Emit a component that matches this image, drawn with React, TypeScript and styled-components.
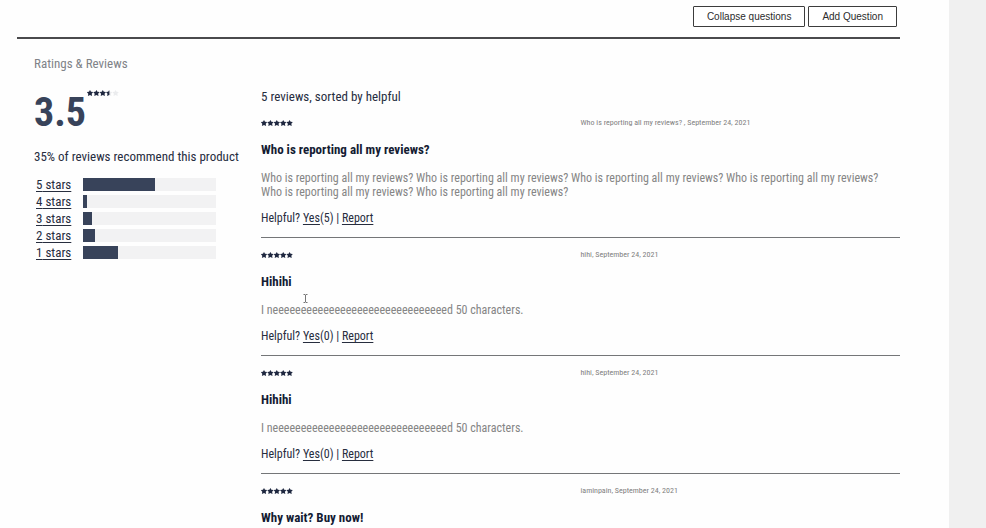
import React from "react";
import styled, { createGlobalStyle } from "styled-components";

const GlobalStyle = createGlobalStyle`
  * { box-sizing: border-box; }
  html, body, #root { height: 100%; }
  body { margin: 0; background: #fefefe; color: #272d3e; font-family: "Roboto Condensed", Roboto, sans-serif; }
  h1, h2, h3, p, ul { margin: 0; padding: 0; font-weight: 400; }
`;

const Page = styled.div`
  min-height: 100%;
  padding-right: 49px;
  border-right: 37px solid #f0f0f0;
`;

const Content = styled.main`
  margin-left: 17px;
`;

const Toolbar = styled.div`
  display: flex;
  justify-content: flex-end;
  gap: 3px;
  padding: 6px 3px 10px 0;
  border-bottom: 2px solid #4a4a4c;
`;

const ToolbarButton = styled.button`
  height: 21px;
  padding: 0 13px;
  border: 1px solid #3c3c3c;
  border-radius: 1px;
  background: #fff;
  color: #2c2c2c;
  font: 10px/19px "Liberation Sans", Arial, sans-serif;
`;

const SectionTitle = styled.h2`
  padding: 16px 0 0 17px;
  color: #808388;
  font-size: 13px;
  line-height: 18px;
`;

const Columns = styled.div`
  display: grid;
  grid-template-columns: 210px minmax(0, 1fr);
  column-gap: 17px;
  padding: 15px 0 0 17px;
`;

const Score = styled.div`
  display: flex;
  align-items: flex-start;
  gap: 1px;
  padding-top: 2px;
`;

const ScoreValue = styled.strong`
  padding-top: 2px;
  color: #38435a;
  font-size: 40px;
  line-height: 42px;
`;

const Recommend = styled.p`
  padding: 14px 0 10px;
  font-size: 13px;
  line-height: 18px;
  white-space: nowrap;
`;

const Breakdown = styled.ul`
  display: grid;
  list-style: none;
`;

const BreakdownRow = styled.li`
  display: grid;
  grid-template-columns: 39px 133px;
  column-gap: 10px;
  align-items: center;
  height: 17px;
`;

const StarLink = styled.a`
  padding-left: 2px;
  color: inherit;
  font-size: 13px;
  line-height: 17px;
  text-underline-offset: 2px;
`;

const Track = styled.div`
  height: 13px;
  background: #f2f2f3;
`;

const Fill = styled.div`
  height: 100%;
  background: #38435a;
`;

const Summary = styled.p`
  font-size: 13px;
  line-height: 18px;
`;

const Review = styled.article`
  position: relative;

  &:not(:last-child) {
    padding-bottom: 12px;
    border-bottom: 1px solid #747678;
  }
`;

const ReviewHeader = styled.header`
  display: grid;
  grid-template-columns: 1fr 1fr;
  align-items: center;
  height: 33px;
`;

const Meta = styled.span`
  color: #808080;
  font-size: 8px;
  line-height: 10px;
`;

const ReviewTitle = styled.h3`
  padding-top: 2px;
  color: #141c33;
  font-size: 13px;
  font-weight: 700;
  line-height: 18px;
`;

const Body = styled.p`
  padding: 12px 0;
  color: #858585;
  font-size: 12px;
  line-height: 14px;
`;

const Helpful = styled.p`
  font-size: 12px;
  line-height: 14px;
`;

const TextButton = styled.button`
  padding: 0;
  border: 0;
  background: none;
  color: inherit;
  font: inherit;
  text-decoration: underline;
  text-underline-offset: 2px;
`;

const StarSvg = styled.svg`
  display: block;
`;

const Caret = styled.svg`
  position: absolute;
  left: 42px;
  top: 56px;
`;

const STAR = "M3 0 L4 1.8 L6.2 2.1 L4.7 3.7 L5.1 6 L3 4.9 L0.9 6 L1.3 3.7 L-0.2 2.1 L2 1.8 Z";

function Stars({ value }: { value: number }) {
  return (
    <StarSvg width="32" height="6" viewBox="0 0 32 6" role="img" aria-label={`${value} out of 5 stars`}>
      <defs>
        <clipPath id={`stars-${value * 10}`}>
          <rect width={value * 6.4} height="6" />
        </clipPath>
      </defs>
      {[0, 1, 2, 3, 4].map((i) => (
        <path key={i} d={STAR} fill="#ebecee" transform={`translate(${i * 6.4} 0)`} />
      ))}
      <g clipPath={`url(#stars-${value * 10})`}>
        {[0, 1, 2, 3, 4].map((i) => (
          <path key={i} d={STAR} fill="#1f2840" transform={`translate(${i * 6.4} 0)`} />
        ))}
      </g>
    </StarSvg>
  );
}

function TextCursor() {
  return (
    <Caret width="5" height="9" viewBox="0 0 5 9" fill="none" stroke="#777" aria-hidden="true">
      <path d="M0.5 0.5 H2 L2.5 1 L3 0.5 H4.5 M2.5 1 V8 M0.5 8.5 H2 L2.5 8 L3 8.5 H4.5" />
    </Caret>
  );
}

const breakdown = [
  { stars: 5, percent: 54 },
  { stars: 4, percent: 3 },
  { stars: 3, percent: 7 },
  { stars: 2, percent: 9 },
  { stars: 1, percent: 26 },
];

const need = "I neeeeeeeeeeeeeeeeeeeeeeeeeeeeeeed 50 characters.";
const who = "Who is reporting all my reviews?";

interface ReviewData {
  author: string;
  title: string;
  body?: string;
  helpful?: number;
  cursor?: boolean;
}

const reviews: ReviewData[] = [
  { author: `${who} `, title: who, body: Array(6).fill(who).join(" "), helpful: 5 },
  { author: "hihi", title: "Hihihi", body: need, helpful: 0, cursor: true },
  { author: "hihi", title: "Hihihi", body: need, helpful: 0 },
  { author: "iaminpain", title: "Why wait? Buy now!" },
];

export default function App() {
  return (
    <>
      <GlobalStyle />
      <Page>
        <Content>
          <Toolbar>
            <ToolbarButton>Collapse questions</ToolbarButton>
            <ToolbarButton>Add Question</ToolbarButton>
          </Toolbar>
          <SectionTitle>Ratings &amp; Reviews</SectionTitle>
          <Columns>
            <aside>
              <Score>
                <ScoreValue>3.5</ScoreValue>
                <Stars value={3.5} />
              </Score>
              <Recommend>35% of reviews recommend this product</Recommend>
              <Breakdown>
                {breakdown.map((row) => (
                  <BreakdownRow key={row.stars}>
                    <StarLink href="#reviews">{row.stars} stars</StarLink>
                    <Track>
                      <Fill style={{ width: `${row.percent}%` }} />
                    </Track>
                  </BreakdownRow>
                ))}
              </Breakdown>
            </aside>
            <section id="reviews">
              <Summary>5 reviews, sorted by helpful</Summary>
              {reviews.map((review, index) => (
                <Review key={index}>
                  <ReviewHeader>
                    <Stars value={5} />
                    <Meta>{review.author}, September 24, 2021</Meta>
                  </ReviewHeader>
                  <ReviewTitle>{review.title}</ReviewTitle>
                  {review.body && <Body>{review.body}</Body>}
                  {review.helpful !== undefined && (
                    <Helpful>
                      Helpful? <TextButton>Yes</TextButton>({review.helpful}) | <TextButton>Report</TextButton>
                    </Helpful>
                  )}
                  {review.cursor && <TextCursor />}
                </Review>
              ))}
            </section>
          </Columns>
        </Content>
      </Page>
    </>
  );
}
